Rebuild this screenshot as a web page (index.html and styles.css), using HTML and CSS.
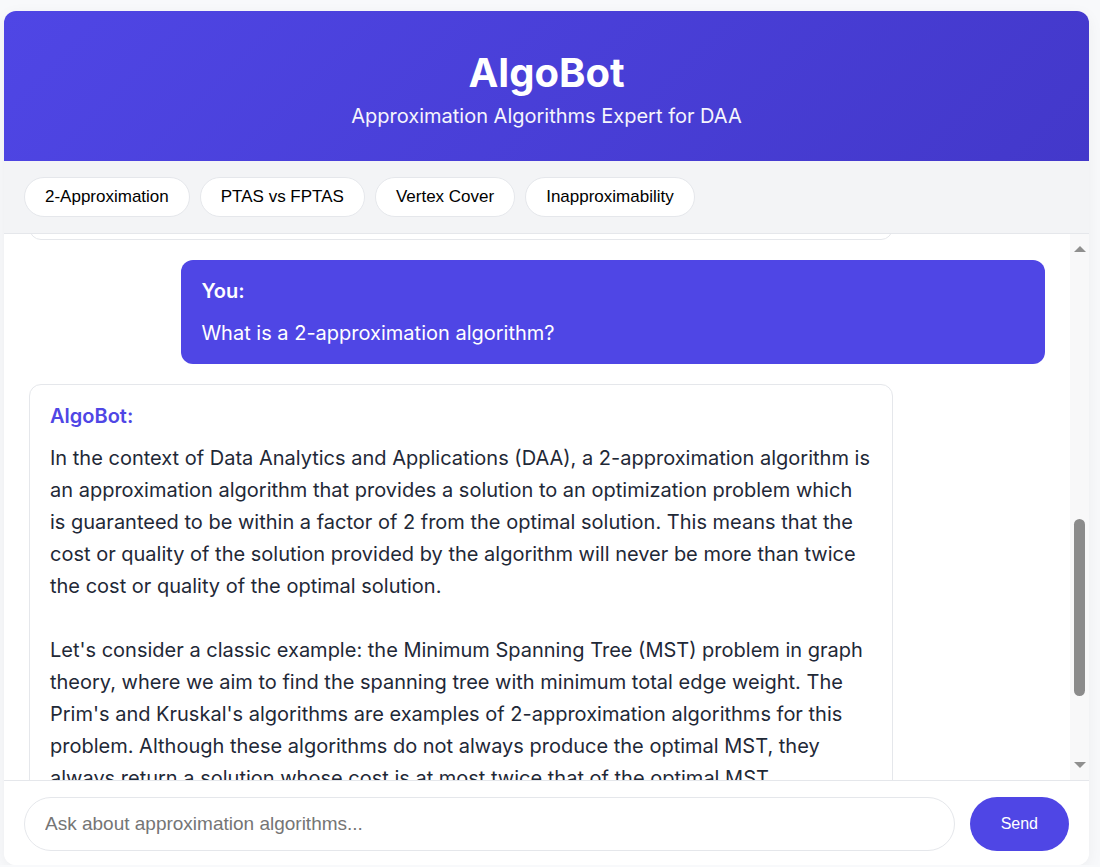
FILE: index.html
```html
<!DOCTYPE html>
<html lang="en">
<head>
<meta charset="utf-8">
<title>AlgoBot</title>
<link rel="stylesheet" href="styles.css">
</head>
<body>
<div class="app">
  <header class="app-header">
    <h1 class="title">AlgoBot</h1>
    <p class="subtitle">Approximation Algorithms Expert for DAA</p>
  </header>
  <div class="topics">
    <button class="chip">2-Approximation</button>
    <button class="chip">PTAS vs FPTAS</button>
    <button class="chip">Vertex Cover</button>
    <button class="chip">Inapproximability</button>
  </div>
  <div class="chat-frame">
    <main class="chat" id="chat">
      <div class="message bot">
        <div class="label">AlgoBot:</div>
        <div class="text">Hello! I'm AlgoBot, your expert assistant for Approximation Algorithms in Design and Analysis of Algorithms (DAA). I can explain concepts, walk through proofs, and work through examples step by step.

Here are some topics I can help you with:
• Approximation ratio and performance guarantees
• 2-approximation algorithms (Vertex Cover, Metric TSP)
• Greedy approximation for Set Cover (ln n ratio)
• Polynomial Time Approximation Schemes (PTAS)
• Fully Polynomial Time Approximation Schemes (FPTAS)
• LP relaxation and randomized rounding
• Inapproximability and hardness of approximation

What would you like to learn about today?</div>
      </div>
      <div class="message user" id="q1">
        <div class="label">You:</div>
        <div class="text">What is a 2-approximation algorithm?</div>
      </div>
      <div class="message bot">
        <div class="label">AlgoBot:</div>
        <div class="text">In the context of Data Analytics and Applications (DAA), a 2-approximation algorithm is an approximation algorithm that provides a solution to an optimization problem which is guaranteed to be within a factor of 2 from the optimal solution. This means that the cost or quality of the solution provided by the algorithm will never be more than twice the cost or quality of the optimal solution.

Let's consider a classic example: the Minimum Spanning Tree (MST) problem in graph theory, where we aim to find the spanning tree with minimum total edge weight. The Prim's and Kruskal's algorithms are examples of 2-approximation algorithms for this problem. Although these algorithms do not always produce the optimal MST, they always return a solution whose cost is at most twice that of the optimal MST.

In general, 2-approximation algorithms are valuable for NP-hard problems such as Vertex Cover and Metric TSP, where finding an exact optimal solution is computationally infeasible, yet a solution that is provably within twice the optimum is good enough in practice.</div>
      </div>
    </main>
    <div class="scrollbar" aria-hidden="true">
      <div class="sb-button"><span class="arrow up"></span></div>
      <div class="sb-track"><div class="sb-thumb"></div></div>
      <div class="sb-button"><span class="arrow down"></span></div>
    </div>
  </div>
  <footer class="composer">
    <input class="composer-input" type="text" placeholder="Ask about approximation algorithms...">
    <button class="send">Send</button>
  </footer>
</div>
<script src="script.js"></script>
</body>
</html>
```

FILE: styles.css
```css
* { box-sizing: border-box; }

body {
  margin: 0;
  background: #f8f9fb;
  font-family: Inter, "Noto Sans", sans-serif;
  color: #1f2937;
}

.app {
  margin: 11px 0 0 4px;
  width: 1085px;
  height: 854px;
  display: flex;
  flex-direction: column;
  background: #ffffff;
  border-radius: 12px;
  overflow: hidden;
  box-shadow: 0 4px 16px rgba(0, 0, 0, 0.05);
}

.app-header {
  flex: none;
  background: linear-gradient(135deg, #4f46e5 0%, #4338ca 100%);
  color: #ffffff;
  text-align: center;
  padding: 38px 20px 30px;
}

.title {
  margin: 0 0 4px;
  font-size: 40px;
  line-height: 48px;
  font-weight: 700;
}

.subtitle {
  margin: 0;
  font-size: 20px;
  line-height: 30px;
  opacity: 0.95;
}

.topics {
  flex: none;
  display: flex;
  gap: 10px;
  padding: 16px 20px;
  background: #f3f4f6;
  border-bottom: 1px solid #e5e7eb;
}

.chip {
  font-family: "Liberation Sans", Arial, sans-serif;
  font-size: 17px;
  line-height: 20px;
  padding: 9px 20px;
  color: #000000;
  background: #ffffff;
  border: 1px solid #e5e7eb;
  border-radius: 25px;
}

.chat-frame {
  flex: 1;
  min-height: 0;
  display: flex;
}

.chat {
  position: relative;
  flex: 1;
  min-width: 0;
  overflow: hidden;
  display: flex;
  flex-direction: column;
  padding: 25px;
  background: #ffffff;
}

.message {
  flex: none;
  width: 85%;
  padding: 15px 20px;
  border-radius: 12px;
  margin-bottom: 20px;
  font-size: 20px;
  line-height: 32px;
}

.message.bot {
  align-self: flex-start;
  background: #ffffff;
  border: 1px solid #e5e7eb;
}

.message.user {
  align-self: flex-end;
  background: #4f46e5;
  color: #ffffff;
}

.label {
  font-weight: 600;
  margin-bottom: 10px;
}

.bot .label { color: #4f46e5; }

.text { white-space: pre-line; }

.scrollbar {
  flex: none;
  width: 19px;
  display: flex;
  flex-direction: column;
  background: #f8f8f9;
}

.sb-button {
  flex: none;
  height: 30px;
  display: flex;
  align-items: center;
  justify-content: center;
}

.sb-track {
  flex: 1;
  display: flex;
  flex-direction: column;
  align-items: center;
}

.sb-thumb {
  width: 11px;
  height: 177px;
  margin-top: 255px;
  border-radius: 6px;
  background: #8b8b8b;
}

.arrow {
  width: 0;
  height: 0;
  border-left: 6px solid transparent;
  border-right: 6px solid transparent;
}

.arrow.up { border-bottom: 6px solid #8f8f8f; }
.arrow.down { border-top: 6px solid #8f8f8f; }

.composer {
  flex: none;
  display: flex;
  gap: 15px;
  padding: 16px 20px 14px;
  border-top: 1px solid #e5e7eb;
  background: #ffffff;
}

.composer-input {
  flex: 1;
  font-family: "Liberation Sans", Arial, sans-serif;
  font-size: 19px;
  line-height: 22px;
  padding: 15px 20px;
  border: 1px solid #e5e7eb;
  border-radius: 30px;
  outline: none;
  color: #1f2937;
}

.composer-input::placeholder { color: #757575; }

.send {
  font-family: "Liberation Sans", Arial, sans-serif;
  font-size: 16px;
  padding: 0 31px;
  border: none;
  border-radius: 30px;
  background: #4f46e5;
  color: #ffffff;
}
```

FILE: script.js
```js
const chat = document.getElementById('chat');
const first = document.getElementById('q1');
chat.scrollTop = first.offsetTop - 26;
```
